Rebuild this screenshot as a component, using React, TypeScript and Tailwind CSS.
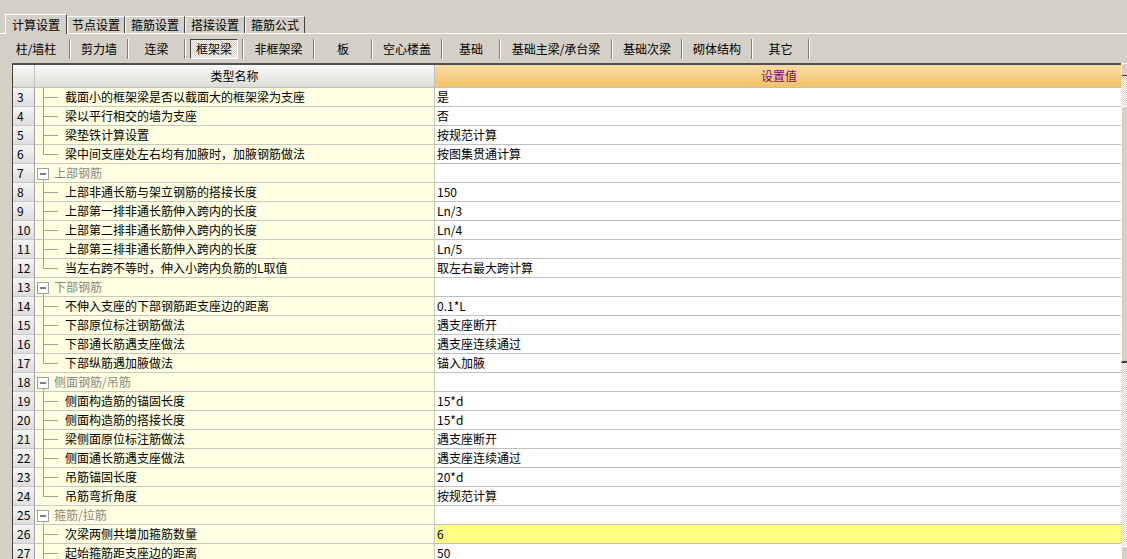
import React from 'react';

type Row =
  | { n: number; group: string }
  | { n: number; name: string; value: string; last?: boolean; hl?: boolean };

const tabs = ['计算设置', '节点设置', '箍筋设置', '搭接设置', '箍筋公式'];
const tabWidths = [62, 58, 60, 60, 60];

const kinds: { label: string; w: number; active?: boolean }[] = [
  { label: '柱/墙柱', w: 66 },
  { label: '剪力墙', w: 56 },
  { label: '连梁', w: 55 },
  { label: '框架梁', w: 56, active: true },
  { label: '非框架梁', w: 69 },
  { label: '板', w: 56 },
  { label: '空心楼盖', w: 68 },
  { label: '基础', w: 56 },
  { label: '基础主梁/承台梁', w: 110 },
  { label: '基础次梁', w: 68 },
  { label: '砌体结构', w: 68 },
  { label: '其它', w: 55 },
];

const rows: Row[] = [
  { n: 3, name: '截面小的框架梁是否以截面大的框架梁为支座', value: '是' },
  { n: 4, name: '梁以平行相交的墙为支座', value: '否' },
  { n: 5, name: '梁垫铁计算设置', value: '按规范计算' },
  { n: 6, name: '梁中间支座处左右均有加腋时，加腋钢筋做法', value: '按图集贯通计算', last: true },
  { n: 7, group: '上部钢筋' },
  { n: 8, name: '上部非通长筋与架立钢筋的搭接长度', value: '150' },
  { n: 9, name: '上部第一排非通长筋伸入跨内的长度', value: 'Ln/3' },
  { n: 10, name: '上部第二排非通长筋伸入跨内的长度', value: 'Ln/4' },
  { n: 11, name: '上部第三排非通长筋伸入跨内的长度', value: 'Ln/5' },
  { n: 12, name: '当左右跨不等时，伸入小跨内负筋的L取值', value: '取左右最大跨计算', last: true },
  { n: 13, group: '下部钢筋' },
  { n: 14, name: '不伸入支座的下部钢筋距支座边的距离', value: '0.1*L' },
  { n: 15, name: '下部原位标注钢筋做法', value: '遇支座断开' },
  { n: 16, name: '下部通长筋遇支座做法', value: '遇支座连续通过' },
  { n: 17, name: '下部纵筋遇加腋做法', value: '锚入加腋', last: true },
  { n: 18, group: '侧面钢筋/吊筋' },
  { n: 19, name: '侧面构造筋的锚固长度', value: '15*d' },
  { n: 20, name: '侧面构造筋的搭接长度', value: '15*d' },
  { n: 21, name: '梁侧面原位标注筋做法', value: '遇支座断开' },
  { n: 22, name: '侧面通长筋遇支座做法', value: '遇支座连续通过' },
  { n: 23, name: '吊筋锚固长度', value: '20*d' },
  { n: 24, name: '吊筋弯折角度', value: '按规范计算', last: true },
  { n: 25, group: '箍筋/拉筋' },
  { n: 26, name: '次梁两侧共增加箍筋数量', value: '6', hl: true },
  { n: 27, name: '起始箍筋距支座边的距离', value: '50' },
];

const checker =
  'bg-[repeating-conic-gradient(#d4d0c8_0%_25%,#ffffff_0%_50%)] bg-[length:2px_2px]';

const TreeLines: React.FC<{ last?: boolean }> = ({ last }) => (
  <svg width="30" height="18" className="shrink-0">
    <line x1="8.5" y1="0" x2="8.5" y2={last ? 9.5 : 18} stroke="#a0a0a0" />
    <line x1="8.5" y1="9.5" x2="23" y2="9.5" stroke="#a0a0a0" />
  </svg>
);

const GroupBox: React.FC = () => (
  <svg width="19" height="18" className="shrink-0">
    <rect x="2.5" y="4.5" width="11" height="11" fill="#ffffff" stroke="#a0a0a0" />
    <line x1="5" y1="10" x2="11" y2="10" stroke="#000000" />
    <line x1="8.5" y1="15.5" x2="8.5" y2="18" stroke="#a0a0a0" />
  </svg>
);

export default function App() {
  return (
    <div className="h-[559px] w-[1127px] overflow-hidden bg-[#d4d0c8] font-['Noto_Sans_CJK_SC','Noto_Sans',sans-serif] text-[12px] leading-none text-black">
      {/* tabs */}
      <div className="flex h-[33px] items-end pl-[5px]">
        {tabs.map((t, i) =>
          i === 0 ? (
            <div
              key={t}
              style={{ width: tabWidths[i] }}
              className="relative z-10 -mb-px flex h-[20px] items-center justify-center border-t border-l border-r border-t-white border-l-white border-r-[#404040] bg-[#d4d0c8]"
            >
              {t}
            </div>
          ) : (
            <div
              key={t}
              style={{ width: tabWidths[i] }}
              className="flex h-[17px] items-center justify-center border-t border-l border-r border-t-white border-l-white border-r-[#404040]"
            >
              {t}
            </div>
          )
        )}
      </div>

      {/* member types */}
      <div className="flex h-[30px] items-center border-t border-white pl-[3px]">
        {kinds.map((k) => (
          <React.Fragment key={k.label}>
            <div style={{ width: k.w }} className="flex h-[20px] items-center justify-center">
              {k.active ? (
                <div className={`flex h-[20px] w-[48px] items-center justify-center border border-t-[#404040] border-l-[#404040] border-b-white border-r-white ${checker}`}>
                  {k.label}
                </div>
              ) : (
                k.label
              )}
            </div>
            <div className="h-[20px] w-[2px] border-l border-r border-l-[#808080] border-r-white" />
          </React.Fragment>
        ))}
      </div>

      {/* table */}
      <div className="ml-[12px] flex">
        <div className="w-[1109px] border-t-2 border-l border-t-[#505050] border-l-[#404040]">
          {/* header */}
          <div className="grid h-[23px] grid-cols-[22px_400px_686px] border-b border-[#c0c0c0]">
            <div className="border-r border-[#c0c0c0] bg-gradient-to-b from-[#fafafa] to-[#dcdcd6]" />
            <div className="flex items-center justify-center border-r border-[#c0c0c0] bg-gradient-to-b from-[#fafafa] to-[#dcdcd6]">
              类型名称
            </div>
            <div className="flex items-center justify-center bg-gradient-to-b from-[#f9dca2] to-[#f2c265] pl-[2px] text-[#800080]">
              设置值
            </div>
          </div>
          {rows.map((r) => (
            <div key={r.n} className="grid h-[19px] grid-cols-[22px_400px_686px]">
              <div className="flex items-center border-r border-b border-r-[#a0a0a0] border-b-[#c8c8c8] bg-gradient-to-b from-[#f4f4f4] to-[#dedede] pl-[4px]">
                {r.n}
              </div>
              {'group' in r ? (
                <>
                  <div className="flex items-center border-r border-b border-[#c8c8c0] bg-[#ffffe1]">
                    <GroupBox />
                    <span className="text-[#888888]">{r.group}</span>
                  </div>
                  <div className="border-b border-[#c0c0c0] bg-white" />
                </>
              ) : (
                <>
                  <div className="flex items-center border-r border-b border-[#c8c8c0] bg-[#ffffe1]">
                    <TreeLines last={r.last} />
                    <span>{r.name}</span>
                  </div>
                  <div className={`flex items-center border-b border-[#c0c0c0] pl-[2px] ${r.hl ? 'bg-[#ffff80]' : 'bg-white'}`}>
                    {r.value}
                  </div>
                </>
              )}
            </div>
          ))}
        </div>

        {/* partial scrollbar */}
        <div className="flex w-[17px] shrink-0 flex-col">
          <div className="h-[13px] border-t border-l border-b border-t-white border-l-white border-b-[#404040] bg-[#d4d0c8]" />
          <div className={`h-[30px] ${checker}`} />
          <div className="h-[257px] border-t border-l border-b-2 border-t-white border-l-white border-b-[#404040] bg-[#d4d0c8]" />
          <div className={`h-[183px] ${checker}`} />
          <div className="h-[20px] border-t border-l border-t-white border-l-white bg-[#d4d0c8]" />
        </div>
      </div>
    </div>
  );
}
